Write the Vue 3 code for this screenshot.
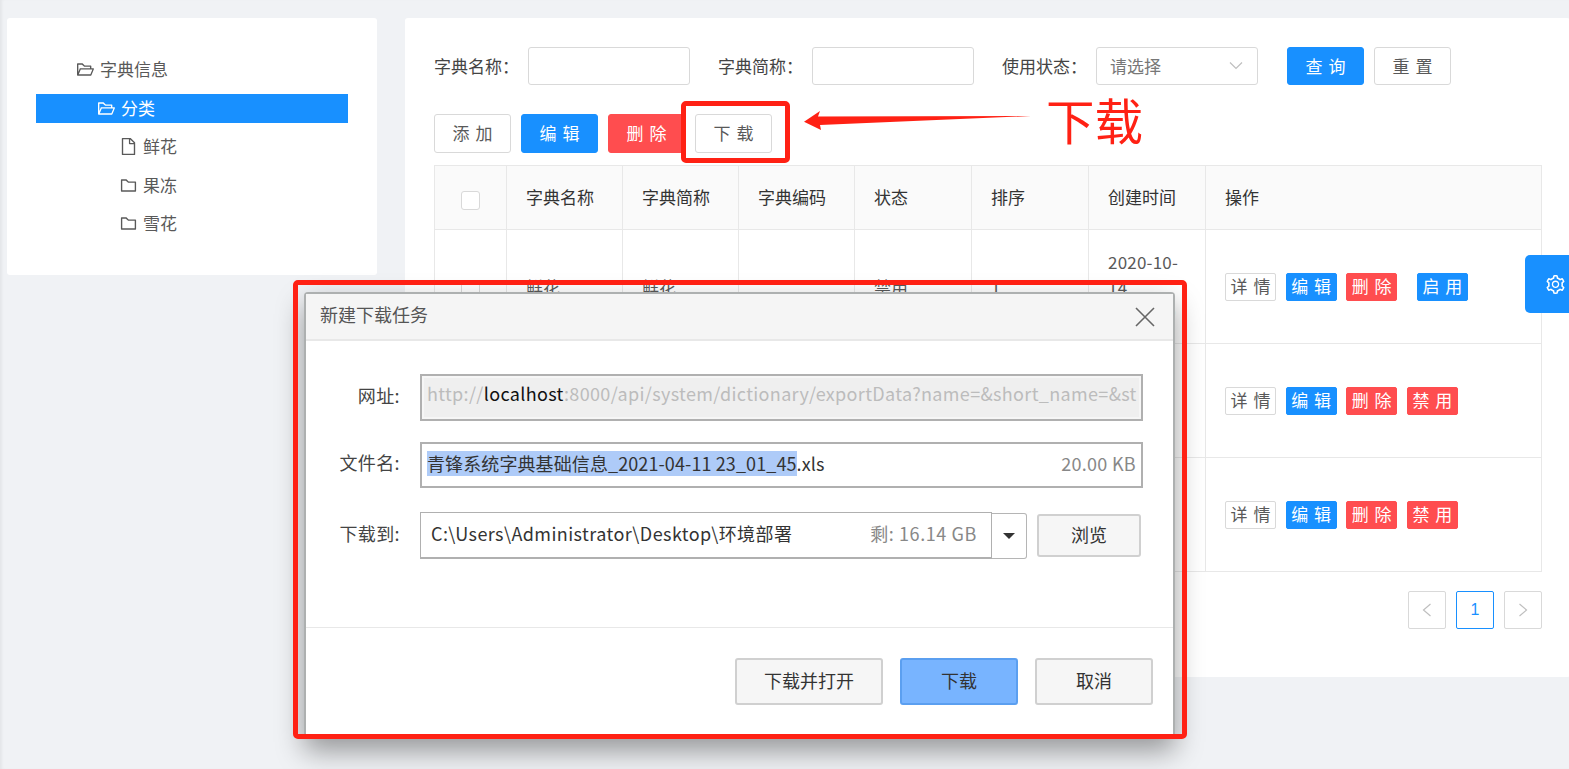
<script setup>
const FOLDER_OPEN = 'M928 444H820V330.4c0-17.7-14.3-32-32-32H473L355.7 186.2a8.15 8.15 0 0 0-5.5-2.2H96c-17.7 0-32 14.3-32 32v592c0 17.7 14.3 32 32 32h698c13 0 24.8-7.9 29.7-20l134-332c1.5-3.8 2.3-7.9 2.3-12 0-17.7-14.3-32-32-32zM136 256h188.5l119.6 114.4H748V444H238c-13 0-24.8 7.9-29.7 20L136 643.2V256zm635.3 512H159l103.3-256h612.4L771.3 768z'
const FOLDER = 'M880 298.4H521L403.7 186.2a8.15 8.15 0 0 0-5.5-2.2H144c-17.7 0-32 14.3-32 32v592c0 17.7 14.3 32 32 32h736c17.7 0 32-14.3 32-32V330.4c0-17.7-14.3-32-32-32zM840 768H184V256h188.5l119.6 114.4H840V768z'
const FILE = 'M854.6 288.6L639.4 73.4c-6-6-14.1-9.4-22.6-9.4H192c-17.7 0-32 14.3-32 32v832c0 17.7 14.3 32 32 32h640c17.7 0 32-14.3 32-32V311.3c0-8.5-3.4-16.7-9.4-22.7zM790.2 326H602V137.8L790.2 326zm1.8 562H232V136h302v216a42 42 0 0 0 42 42h216v494z'
const GEAR = 'M924.8 625.7l-65.5-56c3.1-19 4.7-38.4 4.7-57.8s-1.6-38.8-4.7-57.8l65.5-56a32.03 32.03 0 0 0 9.3-35.2l-.9-2.6a443.74 443.74 0 0 0-79.7-137.9l-1.8-2.1a32.12 32.12 0 0 0-35.1-9.5l-81.3 28.9c-30-24.6-63.5-44-99.7-57.6l-15.7-85a32.05 32.05 0 0 0-25.8-25.7l-2.7-.5c-52.1-9.4-106.9-9.4-159 0l-2.7.5a32.05 32.05 0 0 0-25.8 25.7l-15.8 85.4a351.86 351.86 0 0 0-99 57.4l-81.9-29.1a32 32 0 0 0-35.1 9.5l-1.8 2.1a446.02 446.02 0 0 0-79.7 137.9l-.9 2.6c-4.5 12.5-.8 26.5 9.3 35.2l66.3 56.6c-3.1 18.8-4.6 38-4.6 57.1 0 19.2 1.5 38.4 4.6 57.1L99 625.5a32.03 32.03 0 0 0-9.3 35.2l.9 2.6c18.1 50.4 44.9 96.9 79.7 137.9l1.8 2.1a32.12 32.12 0 0 0 35.1 9.5l81.9-29.1c29.8 24.5 63.1 43.9 99 57.4l15.8 85.4a32.05 32.05 0 0 0 25.8 25.7l2.7.5a449.4 449.4 0 0 0 159 0l2.7-.5a32.05 32.05 0 0 0 25.8-25.7l15.7-85a350 350 0 0 0 99.7-57.6l81.3 28.9a32 32 0 0 0 35.1-9.5l1.8-2.1c34.8-41.1 61.6-87.5 79.7-137.9l.9-2.6c4.5-12.3.8-26.3-9.3-35zM788.3 465.9c2.5 15.1 3.8 30.6 3.8 46.1s-1.3 31-3.8 46.1l-6.6 40.1 74.7 63.9a370.03 370.03 0 0 1-42.6 73.6L721 702.8l-31.4 25.8c-23.9 19.6-50.5 35-79.3 45.8l-38.1 14.3-17.9 97a377.5 377.5 0 0 1-85 0l-17.9-97.2-37.8-14.5c-28.5-10.8-55-26.2-78.7-45.7l-31.4-25.9-93.4 33.2c-17-22.9-31.2-47.6-42.6-73.6l75.5-64.5-6.5-40c-2.4-14.9-3.7-30.3-3.7-45.5 0-15.3 1.2-30.6 3.7-45.5l6.5-40-75.5-64.5c11.3-26.1 25.6-50.7 42.6-73.6l93.4 33.2 31.4-25.9c23.7-19.5 50.2-34.9 78.7-45.7l37.9-14.3 17.9-97.2c28.1-3.2 56.8-3.2 85 0l17.9 97 38.1 14.3c28.7 10.8 55.4 26.2 79.3 45.8l31.4 25.8 92.8-32.9c17 22.9 31.2 47.6 42.6 73.6L781.8 426l6.5 39.9zM512 326c-97.2 0-176 78.8-176 176s78.8 176 176 176 176-78.8 176-176-78.8-176-176-176zm79.2 255.2A111.6 111.6 0 0 1 512 614c-29.9 0-58-11.7-79.2-32.8A111.6 111.6 0 0 1 400 502c0-29.9 11.7-58 32.8-79.2C454 401.6 482.1 390 512 390c29.9 0 58 11.6 79.2 32.8A111.6 111.6 0 0 1 624 502c0 29.9-11.7 58-32.8 79.2z'

const tree = [
  { label: '字典信息', icon: FOLDER_OPEN, level: 'l0' },
  { label: '分类', icon: FOLDER_OPEN, level: 'l1', selected: true },
  { label: '鲜花', icon: FILE, level: 'l2' },
  { label: '果冻', icon: FOLDER, level: 'l2' },
  { label: '雪花', icon: FOLDER, level: 'l2' }
]

const columns = ['字典名称', '字典简称', '字典编码', '状态', '排序', '创建时间', '操作']
const rows = [
  { id: 1, name: '鲜花', short: '鲜花', status: '禁用', sort: '1', date: '2020-10-14 12:00:00', toggle: '启 用', enable: true },
  { id: 2, name: '', short: '', status: '', sort: '', date: '', toggle: '禁 用', enable: false },
  { id: 3, name: '', short: '', status: '', sort: '', date: '', toggle: '禁 用', enable: false }
]
</script>

<template>
  <div class="page">
    <aside class="card side">
      <div
        v-for="node in tree"
        :key="node.label"
        class="node"
        :class="[node.level, { selected: node.selected }]"
      >
        <svg class="tree-icon" viewBox="64 64 896 896" fill="currentColor"><path :d="node.icon" /></svg>
        <span>{{ node.label }}</span>
      </div>
    </aside>

    <main class="card content">
      <div class="filters">
        <label class="f-label first">字典名称：</label>
        <div class="input"></div>
        <label class="f-label">字典简称：</label>
        <div class="input"></div>
        <label class="f-label">使用状态：</label>
        <div class="input select">
          <span>请选择</span>
          <svg width="14" height="14" viewBox="0 0 14 14" fill="none" stroke="#bfbfbf" stroke-width="1.2"><path d="M1 4.500l6 6 6-6" /></svg>
        </div>
        <button class="btn primary query">查 询</button>
        <button class="btn reset">重 置</button>
      </div>

      <div class="toolbar">
        <button class="btn">添 加</button>
        <button class="btn primary">编 辑</button>
        <button class="btn danger">删 除</button>
        <button class="btn">下 载</button>
      </div>

      <table class="grid">
        <colgroup>
          <col style="width: 72px" /><col style="width: 116px" /><col style="width: 116px" /><col style="width: 116px" />
          <col style="width: 117px" /><col style="width: 117px" /><col style="width: 117px" /><col />
        </colgroup>
        <thead>
          <tr>
            <th class="check-cell"><span class="check"></span></th>
            <th v-for="c in columns" :key="c">{{ c }}</th>
          </tr>
        </thead>
        <tbody>
          <tr v-for="r in rows" :key="r.id">
            <td class="check-cell"><span class="check"></span></td>
            <td>{{ r.name }}</td>
            <td>{{ r.short }}</td>
            <td></td>
            <td>{{ r.status }}</td>
            <td>{{ r.sort }}</td>
            <td class="date">{{ r.date }}</td>
            <td>
              <div class="ops">
                <button class="mini">详 情</button>
                <button class="mini blue">编 辑</button>
                <button class="mini red">删 除</button>
                <button class="mini" :class="r.enable ? 'blue shifted' : 'red'">{{ r.toggle }}</button>
              </div>
            </td>
          </tr>
        </tbody>
      </table>

      <div class="pager">
        <span class="pg"><svg width="12" height="14" viewBox="0 0 12 14" fill="none" stroke="#bfbfbf" stroke-width="1.2"><path d="M9.500 1L2.500 7l7 6" /></svg></span>
        <span class="pg active">1</span>
        <span class="pg"><svg width="12" height="14" viewBox="0 0 12 14" fill="none" stroke="#bfbfbf" stroke-width="1.2"><path d="M2.500 1l7 6-7 6" /></svg></span>
      </div>
    </main>

    <div class="gear-tab">
      <svg width="19" height="19" viewBox="64 64 896 896" fill="#fff"><path :d="GEAR" /></svg>
    </div>

    <div class="mark-box"></div>
    <svg class="arrow" width="240" height="30" viewBox="0 0 240 30"><path d="M2 16.700L18 6L16 11.500L229 11L18 20L19 25Z" fill="#ff2114" /></svg>
    <div class="mark-text">下载</div>

    <section class="window">
      <header class="win-head">
        <span class="win-title">新建下载任务</span>
        <svg width="20" height="20" viewBox="0 0 20 20" fill="none" stroke="#666" stroke-width="1.6"><path d="M1 1l18 18M19 1L1 19" /></svg>
      </header>
      <div class="win-body">
        <div class="form-row url-row">
          <label>网址:</label>
          <div class="field url">http://<b>localhost</b>:8000/api/system/dictionary/exportData?name=&amp;short_name=&amp;st</div>
        </div>
        <div class="form-row name-row">
          <label>文件名:</label>
          <div class="field name">
            <span><mark>青锋系统字典基础信息_2021-04-11 23_01_45</mark>.xls</span>
            <em>20.00 KB</em>
          </div>
        </div>
        <div class="form-row path-row">
          <label>下载到:</label>
          <div class="field path">
            <span>C:\Users\Administrator\Desktop\环境部署</span>
            <em>剩: 16.14 GB</em>
          </div>
          <div class="drop"><i></i></div>
          <button class="win-btn browse">浏览</button>
        </div>
      </div>
      <footer class="win-foot">
        <button class="win-btn open">下载并打开</button>
        <button class="win-btn go">下载</button>
        <button class="win-btn cancel">取消</button>
      </footer>
    </section>
    <div class="mark-frame"></div>
  </div>
</template>

<style>
html, body { margin: 0; background: #f0f2f5; overflow: hidden; }
</style>

<style scoped>
.page {
  position: relative;
  box-sizing: border-box;
  width: 1569px;
  height: 769px;
  padding: 18px 0 0 7px;
  display: flex;
  align-items: flex-start;
  gap: 28px;
  background: #f0f2f5;
  box-shadow: inset 3px 0 3px -1px rgba(0, 0, 0, 0.05);
  overflow: hidden;
  font-family: "Noto Sans CJK SC", "Noto Sans", sans-serif;
  color: #555;
}
button { font-family: inherit; padding: 0 0 2px; cursor: pointer; word-spacing: 2px; }
.card { background: #fff; border-radius: 3px; box-sizing: border-box; }

/* tree */
.side { width: 370px; height: 257px; padding: 37px 29px 0; flex: none; }
.node {
  height: 29px;
  margin-bottom: 9.5px;
  display: flex;
  align-items: center;
  gap: 6px;
  font-size: 17px;
  color: #595959;
}
.node span { padding-bottom: 2px; }
.l0 { padding-left: 41px; }
.l1 { padding-left: 62px; }
.l2 { padding-left: 84px; }
.selected { background: #1890ff; color: #fff; }
.tree-icon { width: 17px; height: 17px; flex: none; }

/* main */
.content { flex: 1; height: 659px; padding: 29px 28px 0 29px; }
.filters { display: flex; align-items: center; height: 38px; }
.f-label { font-size: 17px; color: #444; width: 94px; margin-left: 28px; flex: none; white-space: nowrap; padding-bottom: 2px; }
.f-label.first { margin-left: 0; }
.input {
  box-sizing: border-box;
  width: 162px;
  height: 38px;
  border: 1px solid #d9d9d9;
  border-radius: 3px;
  flex: none;
}
.select {
  display: flex;
  align-items: center;
  justify-content: space-between;
  padding: 0 14px 2px 13px;
  font-size: 17px;
  color: #777;
}
.btn {
  box-sizing: border-box;
  width: 77px;
  height: 39px;
  background: #fff;
  border: 1px solid #d9d9d9;
  border-radius: 3px;
  font-size: 17px;
  color: #595959;
}
.btn.primary { background: #1890ff; border-color: #1890ff; color: #fff; }
.btn.danger { background: #ff4d4f; border-color: #ff4d4f; color: #fff; }
.query { margin-left: 29px; height: 38px; }
.reset { margin-left: 10px; height: 38px; }
.toolbar { display: flex; gap: 10px; margin-top: 29px; height: 39px; }

.grid {
  margin-top: 12px;
  width: 1108px;
  table-layout: fixed;
  border-collapse: collapse;
  font-size: 17px;
  color: #595959;
}
.grid th, .grid td {
  border: 1px solid #e8e8e8;
  padding: 0 19px;
  text-align: left;
  box-sizing: border-box;
  line-height: 25px;
}
.grid th { height: 64px; background: #fafafa; font-weight: 400; color: #333; padding-bottom: 2px; }
.grid td { height: 114px; }
.grid .date { letter-spacing: 0.2px; }
.grid .check-cell { padding: 0; text-align: center; }
.check {
  display: inline-block;
  box-sizing: border-box;
  width: 19px;
  height: 19px;
  border: 1px solid #d9d9d9;
  border-radius: 3px;
  background: #fff;
  vertical-align: middle;
}
.ops { display: flex; gap: 9.6px; }
.mini {
  box-sizing: border-box;
  width: 51px;
  height: 28px;
  background: #fff;
  border: 1px solid #d9d9d9;
  border-radius: 2px;
  font-size: 17px;
  line-height: 24px;
  color: #595959;
}
.mini.blue { background: #1890ff; border-color: #1890ff; color: #fff; }
.mini.red { background: #ff4d4f; border-color: #ff4d4f; color: #fff; }
.shifted { margin-left: 10px; }

.pager { display: flex; justify-content: flex-end; gap: 10px; margin-top: 19px; width: 1108px; }
.pg {
  box-sizing: border-box;
  width: 38px;
  height: 38px;
  border: 1px solid #d9d9d9;
  border-radius: 2px;
  display: flex;
  align-items: center;
  justify-content: center;
  font: 16px "Liberation Sans", sans-serif;
  padding-bottom: 1px;
}
.pg.active { border-color: #1890ff; color: #1890ff; }

.gear-tab {
  position: absolute;
  left: 1525px;
  top: 255px;
  width: 44px;
  height: 58px;
  background: #1890ff;
  border-radius: 5px 0 0 5px;
  display: flex;
  align-items: center;
  justify-content: center;
  padding-left: 16px;
  box-sizing: border-box;
}

/* annotations */
.mark-box {
  position: absolute;
  left: 681px;
  top: 101px;
  width: 109px;
  height: 62px;
  box-sizing: border-box;
  border: 5px solid #ff2114;
  border-radius: 5px;
}
.arrow { position: absolute; left: 802px; top: 105px; }
.mark-text {
  position: absolute;
  left: 1046px;
  top: 84px;
  font-size: 48.5px;
  line-height: 70px;
  color: #ff2114;
}
.mark-frame {
  position: absolute;
  left: 293px;
  top: 280px;
  width: 894px;
  height: 459px;
  box-sizing: border-box;
  border: 5px solid #ff2114;
  border-radius: 5px;
  pointer-events: none;
}

/* download dialog */
.window {
  position: absolute;
  left: 304px;
  top: 292px;
  width: 871px;
  height: 447px;
  box-sizing: border-box;
  background: #fff;
  border: 2px solid #adb0b0;
  border-bottom: 0;
  border-radius: 4px 4px 0 0;
  box-shadow: 0 12px 28px rgba(0, 0, 0, 0.38);
  color: #333;
  font-size: 18px;
}
.win-head {
  box-sizing: border-box;
  height: 47px;
  background: #f5f5f5;
  border-bottom: 2px solid #e8e8e8;
  display: flex;
  align-items: center;
  justify-content: space-between;
  padding: 0 18px 0 14px;
  color: #555;
  font-size: 18px;
}
.win-title { padding-bottom: 5px; }
.win-body { box-sizing: border-box; height: 286px; padding-top: 33px; }
.form-row { display: flex; align-items: center; }
.form-row label { width: 94px; margin-right: 20px; text-align: right; color: #444; flex: none; padding-bottom: 6px; letter-spacing: 0.4px; }
.name-row { margin-top: 21px; }
.path-row { margin-top: 24px; }
.field {
  box-sizing: border-box;
  width: 723px;
  border: 2px solid #b0b0b0;
  display: flex;
  align-items: center;
  white-space: nowrap;
  overflow: hidden;
}
.field em { font-style: normal; color: #888; margin-left: auto; }
.url {
  display: block;
  height: 47px;
  line-height: 35px;
  padding-left: 5px;
  background: #efefef;
  box-shadow: inset 0 0 0 2px #f6f6f6;
  color: #bcbcbc;
  letter-spacing: 0.34px;
}
.url b { font-weight: 400; color: #111; }
.name { height: 46px; padding: 0 5px 5px 5px; letter-spacing: 0.1px; }
.name em { letter-spacing: 0.3px; }
.name mark { background: #aecbf8; color: #333; display: inline-block; line-height: 25px; }
.path {
  width: 572px;
  height: 47px;
  padding: 0 14px 4px 10px;
  border-width: 1px;
  border-bottom-width: 2px;
  letter-spacing: 0.42px;
}
.path em { letter-spacing: 0.6px; }
.drop {
  box-sizing: border-box;
  width: 35px;
  height: 46px;
  border: 1px solid #b5b5b5;
  border-left: 0;
  border-radius: 0 3px 3px 0;
  display: flex;
  align-items: center;
  justify-content: center;
  flex: none;
}
.drop i {
  width: 0;
  height: 0;
  border-left: 6px solid transparent;
  border-right: 6px solid transparent;
  border-top: 6px solid #333;
}
.win-btn {
  box-sizing: border-box;
  height: 47px;
  background: #f6f6f6;
  border: 2px solid #d0d0d0;
  border-radius: 3px;
  font-size: 18px;
  color: #333;
  flex: none;
  padding-bottom: 4px;
}
.browse { width: 104px; height: 43px; margin-left: 10px; }
.win-foot {
  box-sizing: border-box;
  height: 112px;
  border-top: 1px solid #e8e8e8;
  padding: 30px 20px 0 0;
  display: flex;
  justify-content: flex-end;
}
.open { width: 148px; }
.go { width: 118px; margin-left: 17px; background: #78b4ff; border-color: #5b9ff0; }
.cancel { width: 118px; margin-left: 17px; }
</style>
